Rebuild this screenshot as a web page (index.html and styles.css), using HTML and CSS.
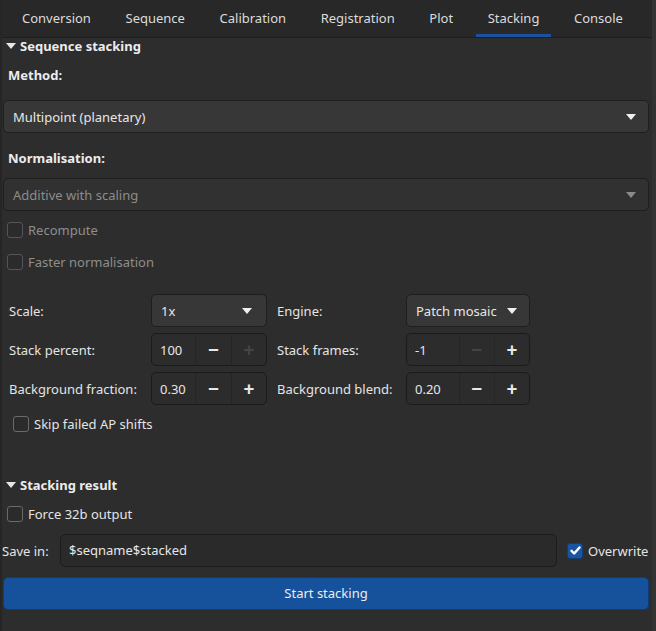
FILE: index.html
```html
<!DOCTYPE html>
<html lang="en">
<head>
  <meta charset="UTF-8" />
  <title>Stacking</title>
  <link rel="stylesheet" href="styles.css">
</head>
<body>
  <div class="tabs">
    <div class="tab">Conversion</div>
    <div class="tab">Sequence</div>
    <div class="tab">Calibration</div>
    <div class="tab">Registration</div>
    <div class="tab">Plot</div>
    <div class="tab active">Stacking</div>
    <div class="tab">Console</div>
  </div>

  <div class="page">
    <div class="expander">
      <svg class="expander-arrow" width="10" height="6" viewBox="0 0 10 6"><polygon points="0,0 10,0 5,6" fill="#e6e6e6"/></svg>
      Sequence stacking
    </div>

    <div class="bold-label method-label">Method:</div>
    <div class="combo wide method-combo">
      <span>Multipoint (planetary)</span>
      <svg width="10" height="6" viewBox="0 0 10 6"><polygon points="0,0 10,0 5,6" fill="#f0f0f0"/></svg>
    </div>

    <div class="bold-label norm-label">Normalisation:</div>
    <div class="combo wide disabled norm-combo">
      <span>Additive with scaling</span>
      <svg width="10" height="6" viewBox="0 0 10 6"><polygon points="0,0 10,0 5,6" fill="#8a8a8a"/></svg>
    </div>

    <label class="check disabled recompute"><span class="box"></span>Recompute</label>
    <label class="check disabled faster"><span class="box"></span>Faster normalisation</label>

    <div class="params">
      <div class="plabel">Scale:</div>
      <div class="combo small">
        <span>1x</span>
        <svg width="10" height="6" viewBox="0 0 10 6"><polygon points="0,0 10,0 5,6" fill="#f0f0f0"/></svg>
      </div>
      <div class="plabel second">Engine:</div>
      <div class="combo small engine">
        <span>Patch mosaic</span>
        <svg width="10" height="6" viewBox="0 0 10 6"><polygon points="0,0 10,0 5,6" fill="#f0f0f0"/></svg>
      </div>

      <div class="plabel">Stack percent:</div>
      <div class="spin left-spin">
        <span class="value">100</span>
        <span class="sbtn">&minus;</span>
        <span class="sbtn off">+</span>
      </div>
      <div class="plabel second">Stack frames:</div>
      <div class="spin right-spin">
        <span class="value">-1</span>
        <span class="sbtn off">&minus;</span>
        <span class="sbtn">+</span>
      </div>

      <div class="plabel">Background fraction:</div>
      <div class="spin left-spin">
        <span class="value">0.30</span>
        <span class="sbtn">&minus;</span>
        <span class="sbtn">+</span>
      </div>
      <div class="plabel second">Background blend:</div>
      <div class="spin right-spin">
        <span class="value">0.20</span>
        <span class="sbtn">&minus;</span>
        <span class="sbtn">+</span>
      </div>
    </div>

    <label class="check skip"><span class="box"></span>Skip failed AP shifts</label>

    <div class="expander result">
      <svg class="expander-arrow" width="10" height="6" viewBox="0 0 10 6"><polygon points="0,0 10,0 5,6" fill="#e6e6e6"/></svg>
      Stacking result
    </div>

    <label class="check force"><span class="box"></span>Force 32b output</label>

    <div class="save-row">
      <span class="save-label">Save in:</span>
      <div class="entry">$seqname$stacked</div>
      <label class="check overwrite"><span class="box checked">
        <svg width="13" height="13" viewBox="0 0 13 13"><path d="M2.5 6.8 L5.2 9.5 L10.5 3.5" stroke="#ffffff" stroke-width="2.4" fill="none" stroke-linecap="round" stroke-linejoin="round"/></svg>
      </span>Overwrite</label>
    </div>

    <div class="start-btn">Start stacking</div>
  </div>
</body>
</html>
```

FILE: styles.css
```css
body {
  margin: 0;
  background: #2d2d2d;
  font-family: "Noto Sans", "Open Sans", sans-serif;
  font-size: 13px;
  color: #e4e4e4;
  height: 631px;
  overflow: hidden;
  border-left: 2px solid #262626;
  border-right: 4px solid #333333;
  box-sizing: border-box;
}

.tabs {
  display: flex;
  height: 37px;
  background: #282828;
  border-bottom: 1px solid #1d1d1d;
  padding-left: 10px;
  margin-left: -2px;
}
.tab {
  padding: 1px 12px 0 12px;
  margin-right: 10.6px;
  line-height: 34px;
  height: 33px;
  border-bottom: 3px solid transparent;
  color: #dcdcdc;
}
.tab.active {
  border-bottom-color: #1a52a0;
}

.page {
  padding: 0 0 0 1px;
}

.expander {
  display: flex;
  align-items: center;
  height: 16px;
  font-weight: bold;
  font-size: 13px;
  color: #ececec;
  padding-left: 3px;
}
.expander-arrow {
  margin-right: 4px;
}
.expander.result {
  margin-top: 41px;
}

.bold-label {
  font-weight: bold;
  line-height: 18px;
  height: 18px;
  padding-left: 5px;
  color: #ececec;
}
.method-label { margin-top: 12px; }
.norm-label { margin-top: 16px; }

.combo {
  display: flex;
  align-items: center;
  justify-content: space-between;
  box-sizing: border-box;
  height: 33px;
  background: #373737;
  border: 1px solid #1e1e1e;
  border-radius: 5px;
  padding: 0 12px 0 9px;
  color: #e6e6e6;
}
.combo.wide {
  margin-right: 3px;
  padding-left: 9px;
}
.combo.disabled {
  background: #313131;
  color: #8c8c8c;
}
.method-combo { margin-top: 16px; }
.norm-combo { margin-top: 11px; }

.check {
  display: flex;
  align-items: center;
  height: 24px;
  padding-left: 4px;
  color: #e4e4e4;
}
.check .box {
  width: 14px;
  height: 14px;
  border: 1px solid #6a6a6a;
  border-radius: 3px;
  background: #2b2b2b;
  margin-right: 5px;
  display: flex;
  align-items: center;
  justify-content: center;
}
.check.disabled {
  color: #8e8e8e;
}
.check.disabled .box {
  border-color: #555555;
}
.recompute { margin-top: 7px; }
.faster { margin-top: 8px; }
.skip { margin-top: 7px; padding-left: 10px; }
.force { margin-top: 9px; }

.params {
  display: grid;
  grid-template-columns: 142px 116px 139px 124px;
  grid-auto-rows: 33px;
  row-gap: 6px;
  margin-top: 20px;
  margin-left: 6px;
}
.plabel {
  display: flex;
  align-items: center;
}
.plabel.second {
  padding-left: 10px;
}
.combo.small {
  padding: 0 14px 0 9px;
}
.combo.small.engine {
  padding-right: 12px;
}

.spin {
  display: flex;
  box-sizing: border-box;
  border: 1px solid #1b1b1b;
  border-radius: 5px;
  background: #2c2c2c;
}
.spin .value {
  display: flex;
  align-items: center;
  padding-left: 8px;
  color: #e6e6e6;
}
.spin .sbtn {
  display: flex;
  align-items: center;
  justify-content: center;
  border-left: 1px solid #262626;
  font-size: 19px;
  font-weight: bold;
  color: #e8e8e8;
}
.spin .sbtn.off {
  color: #454545;
}
.left-spin .value { width: 36px; }
.left-spin .sbtn { width: 35px; }
.right-spin .value { width: 45px; }
.right-spin .sbtn { width: 35px; }

.save-row {
  display: flex;
  align-items: center;
  height: 33px;
  margin-top: 8px;
}
.save-label {
  width: 58px;
  margin-left: -1px;
}
.entry {
  box-sizing: border-box;
  width: 497px;
  height: 33px;
  line-height: 31px;
  background: #2a2a2a;
  border: 1px solid #1c1c1c;
  border-radius: 5px;
  padding-left: 8px;
  color: #e6e6e6;
}
.overwrite {
  padding-left: 10px;
}
.box.checked {
  background: #1a55a0;
  border-color: #123e78;
}

.start-btn {
  box-sizing: border-box;
  height: 33px;
  margin-top: 10px;
  margin-right: 3px;
  background: #16529b;
  border: 1px solid #0f3c74;
  border-radius: 5px;
  text-align: center;
  line-height: 30px;
  color: #ececec;
}
```
